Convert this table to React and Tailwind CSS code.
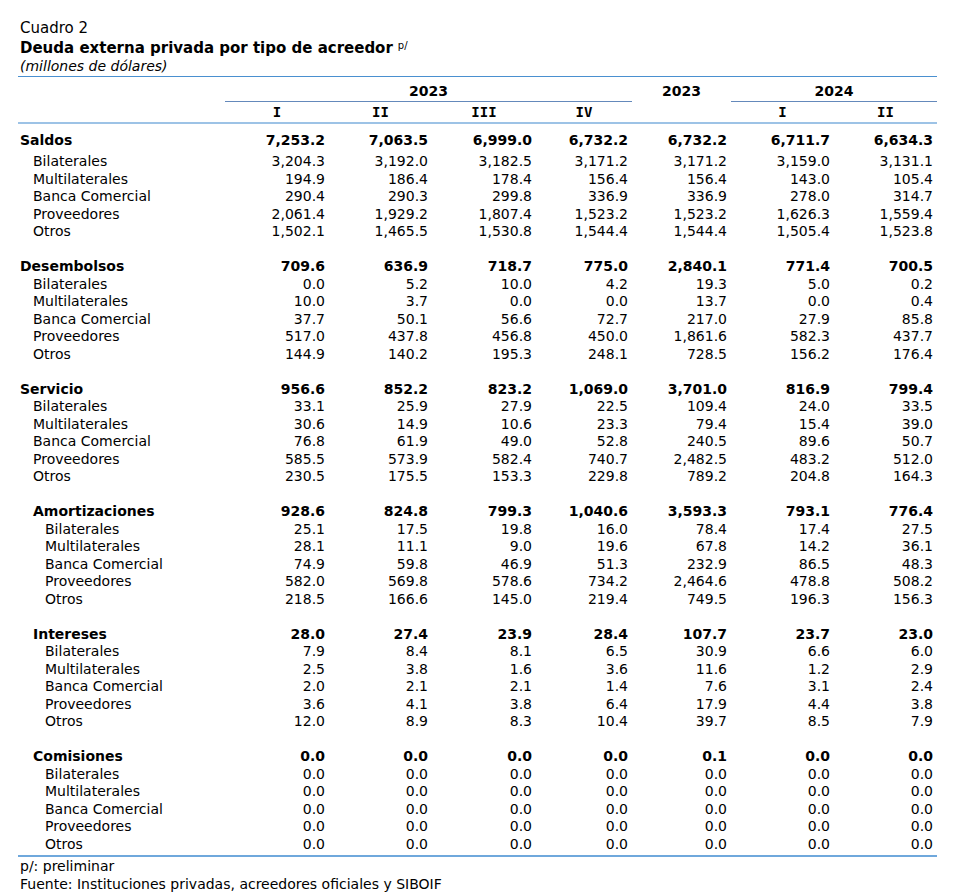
import React from "react";

const cols = "grid grid-cols-[207px_104px_103px_104px_96px_99px_103px_103px]";
const font = { fontFamily: "'DejaVu Sans', Verdana, sans-serif" };

const sub = ["Bilaterales", "Multilaterales", "Banca Comercial", "Proveedores", "Otros"];

const saldos = {
    title: "Saldos",
    total: ["7,253.2", "7,063.5", "6,999.0", "6,732.2", "6,732.2", "6,711.7", "6,634.3"],
    rows: [
        ["3,204.3", "3,192.0", "3,182.5", "3,171.2", "3,171.2", "3,159.0", "3,131.1"],
        ["194.9", "186.4", "178.4", "156.4", "156.4", "143.0", "105.4"],
        ["290.4", "290.3", "299.8", "336.9", "336.9", "278.0", "314.7"],
        ["2,061.4", "1,929.2", "1,807.4", "1,523.2", "1,523.2", "1,626.3", "1,559.4"],
        ["1,502.1", "1,465.5", "1,530.8", "1,544.4", "1,544.4", "1,505.4", "1,523.8"],
    ],
};

const blocks = [
    {
        title: "Desembolsos",
        level: 0,
        total: ["709.6", "636.9", "718.7", "775.0", "2,840.1", "771.4", "700.5"],
        rows: [
            ["0.0", "5.2", "10.0", "4.2", "19.3", "5.0", "0.2"],
            ["10.0", "3.7", "0.0", "0.0", "13.7", "0.0", "0.4"],
            ["37.7", "50.1", "56.6", "72.7", "217.0", "27.9", "85.8"],
            ["517.0", "437.8", "456.8", "450.0", "1,861.6", "582.3", "437.7"],
            ["144.9", "140.2", "195.3", "248.1", "728.5", "156.2", "176.4"],
        ],
    },
    {
        title: "Servicio",
        level: 0,
        total: ["956.6", "852.2", "823.2", "1,069.0", "3,701.0", "816.9", "799.4"],
        rows: [
            ["33.1", "25.9", "27.9", "22.5", "109.4", "24.0", "33.5"],
            ["30.6", "14.9", "10.6", "23.3", "79.4", "15.4", "39.0"],
            ["76.8", "61.9", "49.0", "52.8", "240.5", "89.6", "50.7"],
            ["585.5", "573.9", "582.4", "740.7", "2,482.5", "483.2", "512.0"],
            ["230.5", "175.5", "153.3", "229.8", "789.2", "204.8", "164.3"],
        ],
    },
    {
        title: "Amortizaciones",
        level: 1,
        total: ["928.6", "824.8", "799.3", "1,040.6", "3,593.3", "793.1", "776.4"],
        rows: [
            ["25.1", "17.5", "19.8", "16.0", "78.4", "17.4", "27.5"],
            ["28.1", "11.1", "9.0", "19.6", "67.8", "14.2", "36.1"],
            ["74.9", "59.8", "46.9", "51.3", "232.9", "86.5", "48.3"],
            ["582.0", "569.8", "578.6", "734.2", "2,464.6", "478.8", "508.2"],
            ["218.5", "166.6", "145.0", "219.4", "749.5", "196.3", "156.3"],
        ],
    },
    {
        title: "Intereses",
        level: 1,
        total: ["28.0", "27.4", "23.9", "28.4", "107.7", "23.7", "23.0"],
        rows: [
            ["7.9", "8.4", "8.1", "6.5", "30.9", "6.6", "6.0"],
            ["2.5", "3.8", "1.6", "3.6", "11.6", "1.2", "2.9"],
            ["2.0", "2.1", "2.1", "1.4", "7.6", "3.1", "2.4"],
            ["3.6", "4.1", "3.8", "6.4", "17.9", "4.4", "3.8"],
            ["12.0", "8.9", "8.3", "10.4", "39.7", "8.5", "7.9"],
        ],
    },
    {
        title: "Comisiones",
        level: 1,
        total: ["0.0", "0.0", "0.0", "0.0", "0.1", "0.0", "0.0"],
        rows: Array.from({ length: 5 }, () => ["0.0", "0.0", "0.0", "0.0", "0.0", "0.0", "0.0"]),
    },
];

function Row({ label, values, bold, indent, className = "" }) {
    return (
        <div className={`${cols} h-[17.5px] leading-[17.5px] ${bold ? "font-bold" : ""} ${className}`}>
            <div className={`whitespace-nowrap ${indent}`}>{label}</div>
            {values.map((v, i) => (
                <div key={i} className="text-right pr-[4px]">
                    {v}
                </div>
            ))}
        </div>
    );
}

function Block({ data, level }) {
    const head = level === 0 ? "pl-[2px]" : "pl-[15px]";
    const item = level === 0 ? "pl-[15px]" : "pl-[27px]";
    return (
        <div className="mt-[17.5px]">
            <Row label={data.title} values={data.total} bold indent={head} />
            {data.rows.map((r, i) => (
                <Row key={i} label={sub[i]} values={r} indent={item} />
            ))}
        </div>
    );
}

export default function App() {
    const mono = { fontFamily: "'DejaVu Sans Mono', monospace" };
    return (
        <div className="bg-white w-[971px] h-[894px] text-black text-[14px]" style={font}>
            <div className="pl-[18px] pt-[19px] w-[937px]">
                <div className="pl-[2px]">
                    <div className="text-[15px] leading-[18px]">Cuadro 2</div>
                    <div className="text-[15px] font-bold leading-[20px] mt-[1px]">
                        Deuda externa privada por tipo de acreedor
                        <sup className="text-[10px] font-normal ml-[5px] relative top-[-4px]">p/</sup>
                    </div>
                    <div className="italic leading-[18px] -mt-[1px]">(millones de dólares)</div>
                </div>
                <div className="border-t border-[#4a90d0] mt-[1px]" />
                <div className={`${cols} font-bold`}>
                    <div />
                    <div className="col-span-4 flex flex-col">
                        <div className="h-[24px] leading-[24px] text-center pt-[2px]">2023</div>
                        <div className="border-t border-[#6489bb]" />
                    </div>
                    <div className="h-[24px] leading-[24px] text-center pt-[2px]">2023</div>
                    <div className="col-span-2 flex flex-col">
                        <div className="h-[24px] leading-[24px] text-center pt-[2px]">2024</div>
                        <div className="border-t border-[#6489bb]" />
                    </div>
                </div>
                <div className={`${cols} font-bold h-[20px] leading-[20px]`} style={mono}>
                    <div />
                    {["I", "II", "III", "IV", "", "I", "II"].map((h, i) => (
                        <div key={i} className="text-center">
                            {h}
                        </div>
                    ))}
                </div>
                <div className="border-t-2 border-[#9dc3e6]" />
                <div className="pt-[7.5px]">
                    <Row label={saldos.title} values={saldos.total} bold indent="pl-[2px]" className="mb-[4px]" />
                    {saldos.rows.map((r, i) => (
                        <Row key={i} label={sub[i]} values={r} indent="pl-[15px]" />
                    ))}
                </div>
                {blocks.map((b) => (
                    <Block key={b.title} data={b} level={b.level} />
                ))}
                <div className="border-t-2 border-[#6fa8dc] mt-[2px]" />
                <div className="pl-[2px] leading-[17.5px] pt-[1px]">
                    <div>p/: preliminar</div>
                    <div>Fuente: Instituciones privadas, acreedores oficiales y SIBOIF</div>
                </div>
            </div>
        </div>
    );
}
